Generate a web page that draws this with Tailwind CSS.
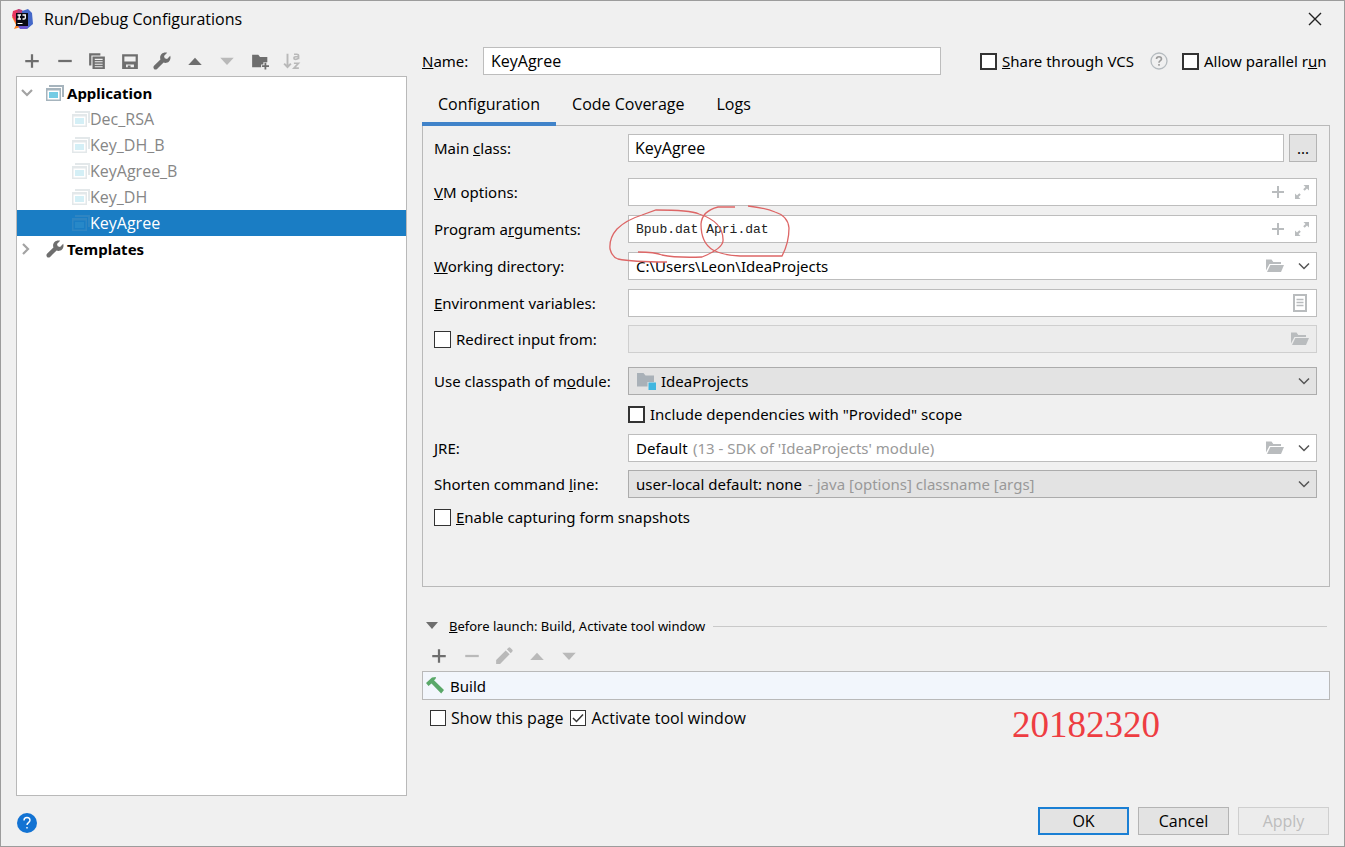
<!DOCTYPE html>
<html lang="en">
<head>
<meta charset="utf-8">
<meta name="viewport" content="width=device-width, initial-scale=1">
<title>Run/Debug Configurations</title>
<script src="https://cdn.jsdelivr.net/npm/@tailwindcss/browser@4"></script>
</head>
<body class="bg-[#f0f0f0] font-['Noto_Sans','Open_Sans',sans-serif] text-[15px] leading-5 text-black">

<svg class="hidden" aria-hidden="true">
  <symbol id="plus" viewBox="0 0 16 16"><path fill="currentColor" d="M7 2h2v5h5v2H9v5H7V9H2V7h5z"/></symbol>
  <symbol id="minus" viewBox="0 0 16 16"><path fill="currentColor" d="M2 7h12v2H2z"/></symbol>
  <symbol id="copy" viewBox="0 0 16 16"><path fill="currentColor" d="M1 1h10v2H3v9H1z"/><path fill="currentColor" fill-rule="evenodd" d="M4 4h11v11H4zM6 6h7v1H6zm0 2.200h7v1H6zm0 2.200h7v1H6zm0 2.200h7v1H6z"/></symbol>
  <symbol id="save" viewBox="0 0 16 16"><path fill="currentColor" fill-rule="evenodd" d="M1 2h14v13H1zM3 4v4.500h10V4zM4.500 11v2.500h7V11z"/><path fill="currentColor" d="M6 12h2.500v2H6z"/></symbol>
  <symbol id="wrench" viewBox="0 0 16 16"><path fill="currentColor" d="M15.300 3.400 12.500 6.200 10.400 5.600 9.800 3.500 12.600.7C10.900.1 8.900.5 7.600 1.800 6.300 3.100 6 5 6.600 6.600L.9 12.300c-.7.700-.7 1.900 0 2.700s2 .7 2.700 0L9.400 9.400c1.600.6 3.500.3 4.800-1 1.300-1.300 1.700-3.300 1.100-5z"/></symbol>
  <symbol id="up" viewBox="0 0 16 16"><path fill="currentColor" d="M2 11.500 8 5l6 6.500z"/></symbol>
  <symbol id="down" viewBox="0 0 16 16"><path fill="currentColor" d="M2 5h12l-6 6.500z"/></symbol>
  <symbol id="newfolder" viewBox="0 0 16 16"><path fill="currentColor" d="M1 2.500h5.500L8 4.500h6.500V9H11v2H9v2.500H1z"/><path fill="currentColor" d="M12 9.500h1.600v2.200H16v1.600h-2.400V15.500H12v-2.200H9.800v-1.600H12z"/></symbol>
  <symbol id="sort" viewBox="0 0 16 16"><path fill="none" stroke="currentColor" stroke-width="1.700" d="M4 1.500v12M1 10.300l3 3.200 3-3.200"/><path fill="none" stroke="currentColor" stroke-width="1.500" d="M9.800 2h2.400q1.600 0 1.600 1.300v3.200M13.800 4.200h-2.600q-1.500 0-1.500 1.100 0 1.200 1.500 1.200 1.400 0 2.600-1M9.700 10h4l-4 4.300h4.400"/></symbol>
  <symbol id="app" viewBox="0 0 18 16"><path fill="#a6b4bd" d="M3 0h15v12h-2V2H3z"/><path fill="#a6b4bd" fill-rule="evenodd" d="M0 3h15v13H0zM1.500 5.500v9h12v-9z"/><path fill="#74cbe4" d="M3 7h9v6H3z"/></symbol>
  <symbol id="chev" viewBox="0 0 12 12"><path fill="none" stroke="currentColor" stroke-width="1.500" d="M1 3.500l5 5 5-5"/></symbol>
  <symbol id="treechev" viewBox="0 0 12 12"><path fill="none" stroke="currentColor" stroke-width="2.200" d="M1 3l5 5 5-5"/></symbol>
  <symbol id="expand" viewBox="0 0 16 16"><path fill="currentColor" d="M9.500 1H15v5.500l-2-2L10.700 6.800 9.200 5.300 11.500 3zM1 9.500l2 2 2.300-2.300 1.500 1.500L4.500 13l2 2H1z"/></symbol>
  <symbol id="folder" viewBox="0 0 18 16"><path fill="currentColor" d="M0 1.500h5.500L7.300 4H15v2H3.500L0 12.500z"/><path fill="currentColor" d="M4.300 7H18l-3 7H1z"/></symbol>
  <symbol id="doc" viewBox="0 0 16 18"><path fill="none" stroke="currentColor" stroke-width="2" d="M2 1h12v16H2z"/><path stroke="currentColor" stroke-width="1.300" d="M4.500 5.500h7M4.500 8.500h7M4.500 11.500h7"/></symbol>
  <symbol id="pencil" viewBox="0 0 16 16"><path fill="currentColor" d="M1 15v-3.500l8.500-8.500L13 6.500 4.500 15zM10.500 2 12 .6q.8-.7 1.600 0L15.400 2.400q.7.800 0 1.600L14 5.500z"/></symbol>
</svg>

<div class="flex min-h-screen flex-col border border-[#9c9c9c] bg-[#f0f0f0]">
  <header class="flex h-9 items-center pr-[21px] pl-[11px]">
    <svg class="size-[21px]" viewBox="0 0 21 21" aria-hidden="true">
      <path fill="#fc801d" d="M0 8 4 16 2 20 9 18 8 5z"/>
      <path fill="#e8365f" d="M1 2 7 0 12 3 14 9 4 13 0 7z"/>
      <path fill="#b0407f" d="M6 0 10 1 13 5 5 5z"/>
      <path fill="#4468c8" d="M10 2 16 0 20 4 21 15 15 20 8 20 10 14z"/>
      <path fill="#6a55cf" d="M15 20 8 20 6 17 17 15z"/>
      <path fill="#0a0a14" d="M4 4h12v13H4z"/>
      <path fill="none" stroke="#fff" stroke-width="1.300" d="M5.500 6h3.500M7.200 6v4M5.500 10h3.500M10.500 6h2.800v3q0 1-1.300 1h-1.500"/>
      <path fill="#fff" d="M5.500 14h5v1h-5z"/>
    </svg>
    <h1 class="ml-[11px] font-['Open_Sans',sans-serif] text-base leading-5">Run/Debug Configurations</h1>
    <button class="ml-auto" aria-label="Close"><svg class="size-4" viewBox="0 0 16 16"><path fill="none" stroke="#222" stroke-width="1.400" d="M2 2l12 12M14 2L2 14"/></svg></button>
  </header>

  <main class="flex flex-1 gap-[15px] pr-[14px] pl-[15px]">
    <aside class="flex w-[391px] shrink-0 flex-col">
      <div class="flex h-[39px] w-[286px] items-center justify-between pt-2 pl-[6px] text-[#6e6e6e]">
        <button aria-label="Add"><svg class="size-5 p-px"><use href="#plus"/></svg></button>
        <button aria-label="Remove"><svg class="size-5 p-px"><use href="#minus"/></svg></button>
        <button aria-label="Copy"><svg class="size-5 p-px"><use href="#copy"/></svg></button>
        <button aria-label="Save"><svg class="size-5 p-px"><use href="#save"/></svg></button>
        <button aria-label="Edit templates"><svg class="size-5 p-px"><use href="#wrench"/></svg></button>
        <button aria-label="Move up"><svg class="size-5 p-px"><use href="#up"/></svg></button>
        <button aria-label="Move down" class="text-[#b9b9b9]"><svg class="size-5 p-px"><use href="#down"/></svg></button>
        <button aria-label="New folder"><svg class="size-5 p-px"><use href="#newfolder"/></svg></button>
        <button aria-label="Sort" class="text-[#b9b9b9]"><svg class="size-5 p-px"><use href="#sort"/></svg></button>
      </div>
      <ul class="flex-1 border border-[#b9b9b9] bg-white pt-[3px] font-['Open_Sans',sans-serif] text-base leading-5 text-[#868686]">
        <li class="flex h-[26px] items-center pl-1 font-['Noto_Sans',sans-serif] text-[15px] font-bold text-black"><svg class="size-3 text-[#a3a3a3]"><use href="#treechev"/></svg><svg class="ml-[13px] mr-[3px] h-4 w-[18px]"><use href="#app"/></svg>Application</li>
        <li class="flex h-[26px] items-center pl-[55px]"><svg class="h-4 w-[18px] opacity-30"><use href="#app"/></svg>Dec_RSA</li>
        <li class="flex h-[26px] items-center pl-[55px]"><svg class="h-4 w-[18px] opacity-30"><use href="#app"/></svg>Key_DH_B</li>
        <li class="flex h-[26px] items-center pl-[55px]"><svg class="h-4 w-[18px] opacity-30"><use href="#app"/></svg>KeyAgree_B</li>
        <li class="flex h-[26px] items-center pl-[55px]"><svg class="h-4 w-[18px] opacity-30"><use href="#app"/></svg>Key_DH</li>
        <li class="flex h-[26px] items-center bg-[#1a7dc4] pl-[55px] text-white"><svg class="h-4 w-[18px] opacity-15"><use href="#app"/></svg>KeyAgree</li>
        <li class="flex h-[26px] items-center pl-[3px] font-['Noto_Sans',sans-serif] text-[15px] font-bold text-black"><svg class="size-3 -rotate-90 text-[#a3a3a3]"><use href="#treechev"/></svg><svg class="ml-[14px] mr-[3px] size-[18px] text-[#6e6e6e]"><use href="#wrench"/></svg>Templates</li>
      </ul>
    </aside>

    <section class="min-w-0 flex-1">
      <div class="mt-[10px] flex h-7 items-center">
        <label for="name" class="w-[61px]"><u>N</u>ame:</label>
        <input id="name" value="KeyAgree" class="h-full min-w-0 flex-1 border border-[#bdbdbd] bg-white px-[7px] font-['Open_Sans',sans-serif] text-base leading-5">
        <label class="ml-[39px] flex w-[159px] items-center gap-[5px]"><input type="checkbox" class="size-[17px] appearance-none border-2 border-[#333] bg-white"><span><u>S</u>hare through VCS</span></label>
        <button aria-label="Help on sharing" class="ml-[11px]"><svg class="size-[18px]" viewBox="0 0 18 18"><circle cx="9" cy="9" r="8" fill="none" stroke="#b5bbbf" stroke-width="1.300"/><path fill="none" stroke="#9b9b9b" stroke-width="1.600" d="M6.500 7q0-2.300 2.500-2.300T11.500 7q0 1-1.300 1.800Q9 9.500 9 10.800M9 12v1.700"/></svg></button>
        <label class="ml-[14px] flex w-[148px] items-center gap-[5px]"><input type="checkbox" class="size-[17px] appearance-none border-2 border-[#333] bg-white"><span>Allow parallel r<u>u</u>n</span></label>
      </div>

      <div role="tablist" class="relative mt-2 flex h-[43px] font-['Open_Sans',sans-serif] text-base leading-5">
        <button role="tab" aria-selected="true" class="border-b-4 border-[#4083c9] px-4 pt-[2px]">Configuration</button>
        <button role="tab" aria-selected="false" class="border-b-4 border-transparent px-4 pt-[2px]">Code Coverage</button>
        <button role="tab" aria-selected="false" class="border-b-4 border-transparent px-4 pt-[2px]">Logs</button>
      </div>

      <div role="tabpanel" class="-mt-px flex flex-col border border-[#b9b9b9] pt-2 pr-3 pb-[59px] pl-[11px]">
        <div class="flex h-7 items-center">
          <label for="main" class="w-[194px] shrink-0">Main <u>c</u>lass:</label>
          <input id="main" value="KeyAgree" class="h-full min-w-0 flex-1 border border-[#bdbdbd] bg-white px-[6px] font-['Open_Sans',sans-serif] text-base leading-5">
          <button class="ml-[5px] h-full w-7 border border-[#b4b4b4] bg-[#e3e3e3]" aria-label="Browse">...</button>
        </div>
        <div class="mt-4 flex h-7 items-center">
          <label for="vm" class="w-[194px] shrink-0"><u>V</u>M options:</label>
          <div class="flex h-full min-w-0 flex-1 items-center gap-2 border border-[#bdbdbd] bg-white pr-[6px] text-[#b9bcbe]">
            <input id="vm" class="h-full min-w-0 flex-1 px-[6px] text-black">
            <button aria-label="Add macro"><svg class="size-4"><use href="#plus"/></svg></button>
            <button aria-label="Expand"><svg class="size-4"><use href="#expand"/></svg></button>
          </div>
        </div>
        <div class="relative mt-[9px] flex h-7 items-center">
          <label for="args" class="w-[194px] shrink-0">Program a<u>r</u>guments:</label>
          <div class="flex h-full min-w-0 flex-1 items-center gap-2 border border-[#bdbdbd] bg-white pr-[6px] text-[#b9bcbe]">
            <input id="args" value="Bpub.dat Apri.dat" class="h-full min-w-0 flex-1 px-[7px] font-['Liberation_Mono',monospace] text-[13px] text-[#222]">
            <button aria-label="Add macro"><svg class="size-4"><use href="#plus"/></svg></button>
            <button aria-label="Expand"><svg class="size-4"><use href="#expand"/></svg></button>
          </div>
          <!-- hand-drawn circles around the two arguments -->
          <svg class="pointer-events-none absolute -top-[10px] left-[174px] z-10 h-[60px] w-[184px]" viewBox="608 205 184 60" fill="none" stroke="#dd6666" stroke-width="1.300" aria-hidden="true">
            <path d="M638 252Q655 252 662 255Q676 258 702 257Q722 249 723 241Q724 222 699 214Q690 210 656 210L642 215Q626 220 617 229Q609 238 610 249Q612 257 618 259Q632 262 667 262"/>
            <path d="M735 207H718Q702 211 701 224Q701 243 713 250Q722 255 740 256H782Q789 243 789 228Q788 216 775 212Q766 208 748 206"/>
          </svg>
        </div>
        <div class="mt-[9px] flex h-7 items-center">
          <label for="wd" class="w-[194px] shrink-0"><u>W</u>orking directory:</label>
          <div class="flex h-full min-w-0 flex-1 items-center gap-[14px] border border-[#bdbdbd] bg-white pr-[6px] text-[#b9bcbe]">
            <input id="wd" value="C:\Users\Leon\IdeaProjects" class="h-full min-w-0 flex-1 px-[7px] text-black">
            <button aria-label="Browse"><svg class="h-4 w-[18px]"><use href="#folder"/></svg></button>
            <button aria-label="Show history"><svg class="size-3 text-[#555]"><use href="#chev"/></svg></button>
          </div>
        </div>
        <div class="mt-[9px] flex h-7 items-center">
          <label for="env" class="w-[194px] shrink-0"><u>E</u>nvironment variables:</label>
          <div class="flex h-full min-w-0 flex-1 items-center border border-[#bdbdbd] bg-white pr-2 text-[#b9bcbe]">
            <input id="env" class="h-full min-w-0 flex-1 px-[6px] text-black">
            <button aria-label="Edit variables"><svg class="h-[18px] w-4"><use href="#doc"/></svg></button>
          </div>
        </div>
        <div class="mt-2 flex h-7 items-center">
          <label class="flex w-[194px] shrink-0 items-center gap-[5px]"><input type="checkbox" class="size-[17px] appearance-none border border-[#333] bg-white"><span>Redirect input from:</span></label>
          <div class="flex h-full min-w-0 flex-1 items-center border border-[#cfcfcf] bg-[#ececec] pr-[7px] text-[#b9bcbe]">
            <input disabled aria-label="Redirect input from" class="h-full min-w-0 flex-1 px-[6px]">
            <button aria-label="Browse"><svg class="h-4 w-[18px]"><use href="#folder"/></svg></button>
          </div>
        </div>
        <div class="mt-[14px] flex h-7 items-center">
          <label for="module" class="w-[194px] shrink-0">Use classpath of m<u>o</u>dule:</label>
          <div class="flex h-full min-w-0 flex-1 items-center border border-[#acacac] bg-[#e3e3e3] pr-[6px] pl-2">
            <svg class="h-[18px] w-[19px]" viewBox="0 0 19 18" aria-hidden="true"><path fill="#a9b1b8" d="M0 1h6.500l2 2.500H17V10h-6.500v4.500H0z"/><path fill="#40b6e0" d="M11.500 10.500H19V18h-7.500z"/></svg>
            <select id="module" class="h-full min-w-0 flex-1 appearance-none pl-[5px]"><option>IdeaProjects</option></select>
            <svg class="size-3 text-[#555]"><use href="#chev"/></svg>
          </div>
        </div>
        <label class="mt-[9px] ml-[194px] flex h-5 items-center gap-[5px]"><input type="checkbox" class="size-[17px] appearance-none border-2 border-[#333] bg-white"><span>Include dependencies with "Provided" scope</span></label>
        <div class="mt-[10px] flex h-7 items-center">
          <label for="jre" class="w-[194px] shrink-0"><u>J</u>RE:</label>
          <div class="flex h-full min-w-0 flex-1 items-center border border-[#bdbdbd] bg-white pr-[6px] pl-[7px]">
            <select id="jre" class="h-full appearance-none"><option>Default</option></select>
            <span class="ml-[5px] flex-1 text-[#999]">(13 - SDK of 'IdeaProjects' module)</span>
            <button aria-label="Browse" class="mr-[14px] text-[#b9bcbe]"><svg class="h-4 w-[18px]"><use href="#folder"/></svg></button>
            <svg class="size-3 text-[#555]"><use href="#chev"/></svg>
          </div>
        </div>
        <div class="mt-2 flex h-7 items-center">
          <label for="shorten" class="w-[194px] shrink-0">Shorten command <u>l</u>ine:</label>
          <div class="flex h-full min-w-0 flex-1 items-center border border-[#acacac] bg-[#e3e3e3] pr-[6px] pl-[7px]">
            <select id="shorten" class="h-full appearance-none"><option>user-local default: none</option></select>
            <span class="ml-[5px] flex-1 text-[#999]">- java [options] classname [args]</span>
            <svg class="size-3 text-[#555]"><use href="#chev"/></svg>
          </div>
        </div>
        <label class="mt-[9px] flex h-5 items-center gap-[5px]"><input type="checkbox" class="size-[17px] appearance-none border border-[#333] bg-white"><span><u>E</u>nable capturing form snapshots</span></label>
      </div>

      <div class="mt-[29px] flex h-5 items-center pr-[3px] pl-1 text-[13px]">
        <svg class="mr-[11px] size-3 text-[#6e6e6e]" viewBox="0 0 12 12"><path fill="currentColor" d="M0 2h12L6 9z"/></svg>
        <h2><u>B</u>efore launch: Build, Activate tool window</h2>
        <div class="ml-2 h-px flex-1 bg-[#c9c9c9]"></div>
      </div>
      <div class="mt-2 flex h-6 w-[157px] items-center justify-between pl-[7px] text-[#b9b9b9]">
        <button aria-label="Add task" class="text-[#6e6e6e]"><svg class="size-5 p-px"><use href="#plus"/></svg></button>
        <button aria-label="Remove task"><svg class="size-5 p-px"><use href="#minus"/></svg></button>
        <button aria-label="Edit task"><svg class="size-5 p-px"><use href="#pencil"/></svg></button>
        <button aria-label="Move task up"><svg class="size-5 p-px"><use href="#up"/></svg></button>
        <button aria-label="Move task down"><svg class="size-5 p-px"><use href="#down"/></svg></button>
      </div>
      <ul class="mt-[3px] border border-[#b9b9b9] bg-[#f2f6fc]">
        <li class="flex h-[27px] items-center pl-[2px]"><svg class="mr-[5px] size-5" viewBox="0 0 20 20" aria-hidden="true"><path fill="#59a869" d="M1 7 7 1.500 11 1 10.500 3 9 4.200 19 14 16.200 17.500 6.500 7.500 3.500 10z"/></svg>Build</li>
      </ul>
      <div class="mt-[5px] flex h-10 items-start pl-2 font-['Open_Sans',sans-serif] text-base leading-5">
        <label class="mt-[3px] flex h-5 items-center gap-[5px]"><input type="checkbox" class="size-4 appearance-none border border-[#333] bg-white"><span>Show this page</span></label>
        <label class="mt-[3px] ml-[7px] flex h-5 items-center gap-[5px]"><span class="grid"><input type="checkbox" checked class="col-start-1 row-start-1 size-4 appearance-none border border-[#333] bg-white"><svg class="pointer-events-none col-start-1 row-start-1 size-4" viewBox="0 0 16 16"><path fill="none" stroke="#333" stroke-width="1.500" d="M3 8l3.500 3.500L13 4.500"/></svg></span><span>Activate tool window</span></label>
        <strong class="mr-[170px] ml-auto font-['Liberation_Serif',serif] text-[37px] leading-10 font-normal text-[#ee3d42]">20182320</strong>
      </div>
    </section>
  </main>

  <footer class="flex items-center gap-[9px] pt-[11px] pr-[15px] pb-[11px] pl-4 font-['Open_Sans',sans-serif] text-base leading-5">
    <button aria-label="Help" class="mt-1 mr-auto"><svg class="size-5" viewBox="0 0 20 20"><circle cx="10" cy="10" r="10" fill="#1373d3"/><path fill="none" stroke="#fff" stroke-width="1.400" d="M7 7.500q0-3 3-3t3 2.800q0 1.200-1.500 2.300-1.500 1-1.500 2.500M10 14v1.500"/></svg></button>
    <button class="flex h-7 w-[91px] items-center justify-center border-2 border-[#1a7fd4] bg-[#e3e3e3]">OK</button>
    <button class="flex h-7 w-[91px] items-center justify-center border border-[#b4b4b4] bg-[#e3e3e3]">Cancel</button>
    <button disabled class="flex h-7 w-[91px] items-center justify-center border border-[#cfcfcf] bg-[#ececec] text-[#bdbdbd]">Apply</button>
  </footer>
</div>
</body>
</html>
